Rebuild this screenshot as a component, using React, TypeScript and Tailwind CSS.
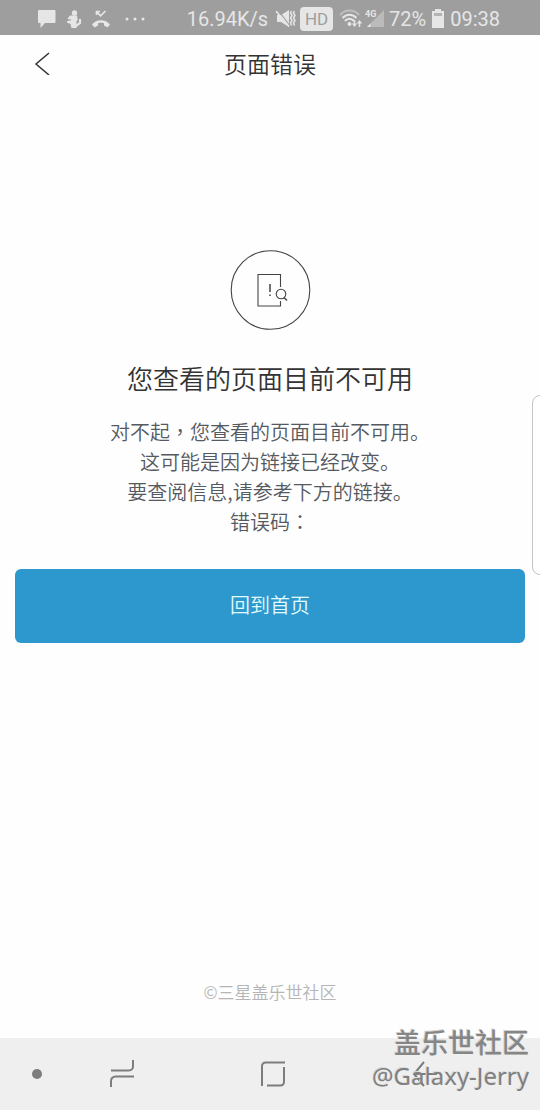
import React from "react"

const bodyLines: React.ReactNode[] = [
  <>
    对不起<Wide>，</Wide>您查看的页面目前不可用。
  </>,
  "这可能是因为链接已经改变。",
  "要查阅信息,请参考下方的链接。",
  <>
    错误码<Wide>：</Wide>
  </>,
]

// Full-width punctuation that sits in the middle of its cell
function Wide({ children }: { children: React.ReactNode }) {
  return <span className="font-['Noto_Sans_CJK_TC',sans-serif]" lang="zh-TW">{children}</span>
}

function StatusBar() {
  return (
    <div className="flex h-[35px] items-center justify-between bg-[#9e9e9e] pl-[37px] pr-10 pt-0.5 font-['Roboto',sans-serif] text-xl leading-6 font-normal text-[#e6e6e6]">
      <div className="flex items-center">
        {/* Message */}
        <svg className="h-5 w-5" viewBox="0 0 20 20" fill="currentColor" aria-hidden="true">
          <path d="M2 1h15.500a1 1 0 0 1 1 1v11a1 1 0 0 1-1 1H8l-4.500 5v-5H2a1 1 0 0 1-1-1V2a1 1 0 0 1 1-1z" />
        </svg>
        {/* Figure with raised arm */}
        <svg className="ml-2 h-5 w-5" viewBox="0 0 20 20" fill="currentColor" aria-hidden="true">
          <circle cx="9.500" cy="4" r="2.700" />
          <path d="M5 6.500h7l.7 4-1.200 2v6.500H6.500l-1-4L2 13.500v-1.500L5.500 11.500l.5-1.500-2 .5-1.500-1z" />
          <path d="M11 17l4-3V10" fill="none" stroke="currentColor" strokeWidth="2.200" />
        </svg>
        {/* Missed call */}
        <svg className="ml-1.5 h-5 w-5" viewBox="0 0 20 20" fill="currentColor" aria-hidden="true">
          <path d="M1 15.500C5 9.700 15 9.700 19 15.500L16.500 18.500 13 16.500V14.300C11 13.700 9 13.700 7 14.300V16.500L3.500 18.500z" />
          <path d="M5.500 6V2.500H9M5.500 2.500l4 4.300 5-4.800" fill="none" stroke="currentColor" strokeWidth="1.700" />
        </svg>
        <svg className="ml-3 h-5 w-6" viewBox="0 0 24 20" fill="currentColor" aria-hidden="true">
          <circle cx="4" cy="10" r="1.500" />
          <circle cx="12" cy="10" r="1.500" />
          <circle cx="20" cy="10" r="1.500" />
        </svg>
      </div>

      <div className="flex items-center">
        <span>16.94K/s</span>
        {/* Muted, vibrate */}
        <svg className="ml-2 h-5 w-5" viewBox="0 0 20 20" fill="currentColor" aria-hidden="true">
          <path d="M1 6h4l8-5v17l-8-5H1z" />
          <path d="M2 1l12 16" stroke="#9e9e9e" strokeWidth="1.200" />
          <path d="M0 2l13 15.500" stroke="currentColor" strokeWidth="1.500" />
          <path d="M15.500 2l-1 2 1.500 2.500-1.500 2.500 1.500 2.500-1.500 2.500 1 2.500M18.500 2l-1 2 1.500 2.500-1.500 2.500 1.500 2.500-1.500 2.500 1 2.500" fill="none" stroke="currentColor" strokeWidth="1.500" />
        </svg>
        <span className="ml-1 flex h-6 w-[33px] items-center justify-center rounded-sm bg-[#e6e6e6] text-[17px] text-[#9e9e9e]">
          HD
        </span>
        {/* Wi-Fi */}
        <svg className="ml-1.5 h-5 w-6" viewBox="0 0 24 20" fill="none" stroke="currentColor" strokeWidth="2" aria-hidden="true">
          <path d="M1 6C6 0 15 0 20 6" opacity=".45" />
          <path d="M3.500 9C7.500 4.500 13.500 4.500 17.500 9M6 12c2.500-3 6.500-3 9 0" />
          <circle cx="10.500" cy="15" r="2" fill="currentColor" stroke="none" />
          <path d="M15.500 11v5M20.500 18v-5" strokeWidth="1.500" />
          <path d="M12.800 14.500h5.400L15.500 18zM17.800 14.500h5.400L20.500 11z" fill="currentColor" stroke="none" />
        </svg>
        {/* Mobile signal */}
        <svg className="ml-0.5 h-5 w-5" viewBox="0 0 20 20" fill="currentColor" aria-hidden="true">
          <path d="M19 1v17H2z" opacity=".4" />
          <path d="M5.500 14.500V18H2z" />
          <text x="0" y="8" fontSize="9" fontWeight="700">4G</text>
        </svg>
        <span className="ml-1">72%</span>
        {/* Battery */}
        <svg className="ml-1.5 h-5 w-3" viewBox="0 0 12 20" aria-hidden="true">
          <path d="M3 0h6v2H12v17H0V2h3z" fill="currentColor" />
          <path d="M2 4h8v3H2z" fill="#b4b4b4" />
        </svg>
        <span className="ml-1.5">09:38</span>
      </div>
    </div>
  )
}

function NavBar() {
  return (
    <nav className="relative flex h-[72px] items-center bg-[#efefef] pl-8 pr-[100px] text-[#7d7d7d]">
      <button type="button" aria-label="Hide bar" className="mr-16 flex h-8 w-[10px] items-center">
        <span className="h-[10px] w-[10px] rounded-full bg-[#7d7d7d]" />
      </button>
      <div className="flex flex-1 items-center justify-between">
        <button type="button" aria-label="Recents">
          <svg className="h-8 w-8" viewBox="0 0 32 32" fill="none" stroke="currentColor" strokeWidth="2">
            <path d="M5 12.500h18a4 4 0 0 0 4-4V2M5 29v-6a4.500 4.500 0 0 1 4.500-4.500H28" />
          </svg>
        </button>
        <button type="button" aria-label="Home">
          <svg className="h-8 w-8" viewBox="0 0 32 32" fill="none" stroke="currentColor" strokeWidth="2">
            <path d="M5 28V8a3.500 3.500 0 0 1 3.500-3.500H28M27 9v15a3.500 3.500 0 0 1-3.500 3.500H10" />
          </svg>
        </button>
        <button type="button" aria-label="Back">
          <svg className="h-8 w-8" viewBox="0 0 32 32" fill="none" stroke="currentColor" strokeWidth="2">
            <path d="M16 4L6 16l10 12M6 16h23" />
          </svg>
        </button>
      </div>

      {/* Watermark */}
      <div className="pointer-events-none absolute bottom-[18px] right-[11px] flex flex-col items-end whitespace-nowrap">
        <span className="font-['Noto_Sans_CJK_SC',sans-serif] text-[27px] font-medium leading-9 text-[#868686] [text-shadow:-1px_-1px_0_#d2d2d2]">
          盖乐世社区
        </span>
        <span className="font-['Noto_Sans',sans-serif] text-2xl font-normal leading-8 text-[#808080] [text-shadow:-1px_-1px_0_#dadada]">
          @Galaxy-Jerry
        </span>
      </div>
    </nav>
  )
}

export default function App() {
  return (
    <div className="relative flex min-h-screen flex-col overflow-hidden bg-[#fefefe] font-['Noto_Sans_CJK_SC',sans-serif] font-[350]" lang="zh-CN">
      <StatusBar />

      <header className="grid h-14 grid-cols-[72px_1fr_72px] items-center text-[#333333]">
        <button type="button" aria-label="返回" className="pl-8">
          <svg className="h-6 w-5" viewBox="0 0 20 24" fill="none" stroke="currentColor" strokeWidth="1.500">
            <path d="M17 2L4 13l13 11" />
          </svg>
        </button>
        <h1 className="text-center text-[23px] leading-8 font-[350]">页面错误</h1>
      </header>

      <main className="flex flex-1 flex-col items-center px-[15px] pt-[159px]">
        <svg className="h-20 w-20 overflow-visible" viewBox="0 0 80 80" fill="none" stroke="#444444" aria-hidden="true">
          <circle cx="40.500" cy="40" r="39.300" strokeWidth="1.100" />
          <path d="M50.500 37V24.500H28V56h22.500v-5" strokeWidth="1.100" />
          <path d="M40 34v8M40 44.500V46" strokeWidth="1.500" />
          <circle cx="51" cy="44" r="4.800" strokeWidth="1.100" />
          <path d="M54 47.500l3 3" strokeWidth="1.400" />
        </svg>

        <h2 className="mt-[30px] text-center text-[26px] leading-9 font-[350] text-[#333333]">您查看的页面目前不可用</h2>

        <div className="mt-[21px] text-center text-xl leading-[30px] text-[#555960]">
          {bodyLines.map((line, i) => (
            <p key={i}>{line}</p>
          ))}
        </div>

        <button type="button" className="mt-8 h-[74px] w-full rounded-md bg-[#2d98cd] pb-0.5 text-xl text-[#e2fdff]">
          回到首页
        </button>

        <p className="mt-auto pb-[34px] text-[17px] leading-6 text-[#b5b5b5]">©三星盖乐世社区</p>
      </main>

      {/* Edge panel handle */}
      <div className="absolute -right-2 top-[395px] h-[180px] w-4 rounded-lg border border-[#c4c4c4] bg-white" />

      <NavBar />
    </div>
  )
}
